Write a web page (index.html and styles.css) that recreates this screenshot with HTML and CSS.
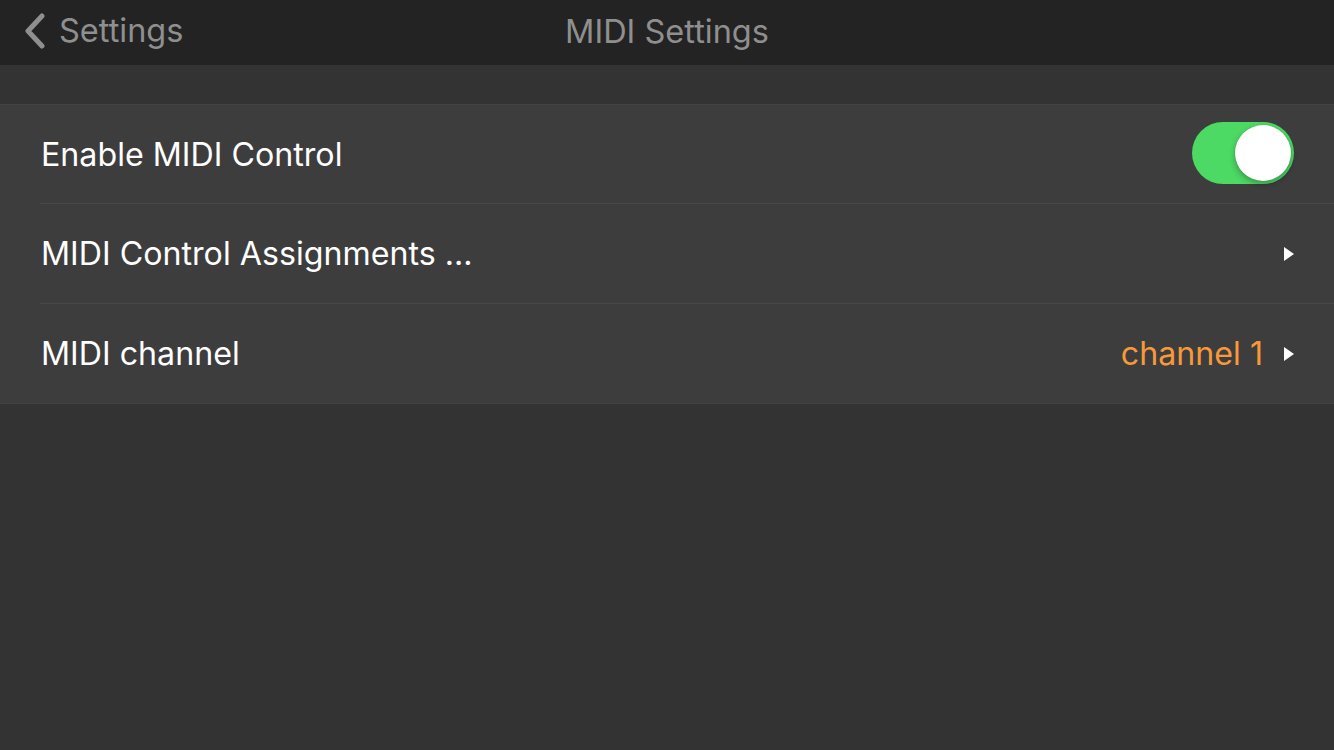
FILE: index.html
```html
<!DOCTYPE html>
<html>
<head>
<meta charset="utf-8">
<link rel="stylesheet" href="styles.css">
</head>
<body>
<header class="nav">
  <div class="back">
    <svg class="back-icon" width="22" height="36" viewBox="0 0 22 36"><path d="M18 3 L4 18 L18 33" fill="none" stroke="#8f8f8f" stroke-width="5" stroke-linecap="round" stroke-linejoin="round"/></svg>
    <span>Settings</span>
  </div>
  <div class="title">MIDI Settings</div>
  <div class="spacer"></div>
</header>
<main class="content">
  <section class="group">
    <div class="row">
      <span class="label">Enable MIDI Control</span>
      <div class="toggle"><div class="knob"></div></div>
    </div>
    <div class="row">
      <span class="label">MIDI Control Assignments ...</span>
      <svg class="tri" width="12" height="16" viewBox="0 0 12 16"><path d="M1 1 L11 8 L1 15 Z" fill="#fff"/></svg>
    </div>
    <div class="row">
      <span class="label">MIDI channel</span>
      <span class="value">channel 1</span>
      <svg class="tri" width="12" height="16" viewBox="0 0 12 16"><path d="M1 1 L11 8 L1 15 Z" fill="#fff"/></svg>
    </div>
  </section>
</main>
</body>
</html>
```
FILE: styles.css
```css
html, body {
  margin: 0;
  padding: 0;
  height: 100%;
  background: #333333;
  font-family: Inter, "Liberation Sans", sans-serif;
}
.nav {
  height: 65px;
  background: #232323;
  display: flex;
  align-items: center;
  padding: 0 24px;
  box-sizing: border-box;
}
.back {
  flex: 1;
  display: flex;
  align-items: center;
  gap: 13px;
  color: #8f8f8f;
  font-size: 32.5px;
  margin-top: -5px;
}
.back-icon { margin-top: 2px; }
.title {
  color: #8f8f8f;
  font-size: 32.5px;
  margin-top: -2px;
}
.spacer { flex: 1; }
.content {
  padding-top: 39px;
}
.group {
  background: #3d3d3d;
  border-top: 1px solid #434343;
  border-bottom: 1px solid #434343;
}
.row {
  height: 99px;
  margin-left: 40px;
  padding-right: 40px;
  display: flex;
  align-items: center;
  border-bottom: 1px solid #484848;
}
.row:first-child { height: 98px; }
.row:last-child { border-bottom: none; }
.label {
  flex: 1;
  color: #ffffff;
  font-size: 32.2px;
  padding-left: 1px;
}
.value {
  color: #f7993b;
  font-size: 32.2px;
  margin-right: 20px;
}
.tri { margin-right: -1px; }
.toggle {
  width: 102px;
  height: 62px;
  border-radius: 31px;
  background: #4cd964;
  position: relative;
  margin-top: -2px;
}
.knob {
  position: absolute;
  right: 3px;
  top: 3px;
  width: 56px;
  height: 56px;
  border-radius: 50%;
  background: #ffffff;
  box-shadow: 0 3px 6px rgba(0,0,0,0.3), 0 0 1px rgba(0,0,0,0.2);
}
```
